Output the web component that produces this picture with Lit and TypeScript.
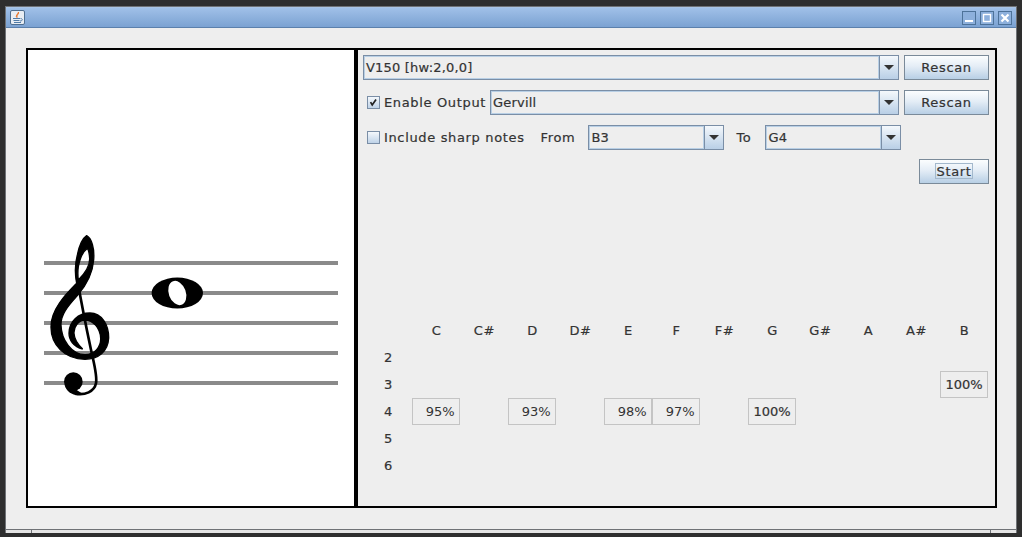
import { LitElement, css, html, svg } from 'lit';
import { customElement } from 'lit/decorators.js';

const NOTES = ['C', 'C#', 'D', 'D#', 'E', 'F', 'F#', 'G', 'G#', 'A', 'A#', 'B'];
const OCTAVES = [2, 3, 4, 5, 6];

// accuracy per note, keyed "note+octave"
const SCORES: Record<string, string> = {
  B3: '100%',
  C4: '  95%',
  D4: '  93%',
  E4: '  98%',
  F4: '  97%',
  G4: '100%',
};

const STAFF_LINES = [263, 293, 323, 353, 383];

@customElement('app-root')
export class AppRoot extends LitElement {
  static styles = css`
    :host {
      display: block;
      width: 1022px;
      height: 537px;
      box-sizing: border-box;
      padding: 6px 5px 5px 5px;
      background: #2e2e2e;
      font-family: 'DejaVu Sans', sans-serif;
      font-size: 13px;
      letter-spacing: 0.65px;
      -webkit-text-stroke: 0.2px #333;
      color: #333;
      overflow: hidden;
    }
    .window {
      height: 100%;
      display: flex;
      flex-direction: column;
      border: 1px solid #6f7276;
      border-bottom: none;
      background: #eee;
    }
    .titlebar {
      height: 21px;
      box-sizing: border-box;
      flex: none;
      display: flex;
      align-items: center;
      padding: 0 4px 0 4px;
      background: linear-gradient(#a0c0e8, #7ba2d2);
      border-top: 1px solid #a9c4e6;
      border-bottom: 1px solid #5b80ac;
    }
    .app-icon {
      width: 15px;
      height: 15px;
      display: block;
    }
    .spacer {
      flex: 1;
    }
    .win-btn {
      width: 14px;
      height: 14px;
      margin-left: 4px;
      display: block;
    }
    .content {
      flex: 1;
      padding: 20px 20px 0 20px;
    }
    .frame {
      width: 971px;
      height: 460px;
      box-sizing: border-box;
      display: flex;
      border: 2px solid #000;
      background: #eee;
    }
    .staff {
      width: 330px;
      height: 456px;
      box-sizing: border-box;
      flex: none;
      background: #fff;
      border-right: 4px solid #000;
      display: block;
    }
    .controls {
      flex: 1;
      min-width: 0;
      padding: 5px 6px 0 5px;
      display: flex;
      flex-direction: column;
    }
    .row {
      display: flex;
      align-items: center;
      height: 25px;
      flex: none;
      margin-bottom: 10px;
    }
    .row.tight {
      margin-bottom: 9px;
    }
    .row.start {
      justify-content: flex-end;
      margin-bottom: 0;
    }
    .combo {
      height: 25px;
      box-sizing: border-box;
      display: flex;
      border: 1px solid #7a8ea6;
      flex: none;
      letter-spacing: 0.2px;
    }
    .combo .value {
      flex: 1;
      box-sizing: border-box;
      border: 1px solid #b8cfe5;
      padding: 0 2px 1px 1px;
      display: flex;
      align-items: center;
      background: #eee;
    }
    .combo .arrow {
      width: 18px;
      border-left: 1px solid #7a8ea6;
      display: flex;
      align-items: center;
      justify-content: center;
      background: linear-gradient(#f4f8fc, #b9cfe6);
    }
    .arrow i {
      display: block;
      width: 0;
      height: 0;
      border-left: 5px solid transparent;
      border-right: 5px solid transparent;
      border-top: 5px solid #333;
    }
    .wide {
      flex: 1;
    }
    .output {
      width: 409px;
    }
    .small {
      width: 136px;
    }
    .btn {
      height: 25px;
      box-sizing: border-box;
      flex: none;
      display: flex;
      align-items: center;
      justify-content: center;
      border: 1px solid #7a8a99;
      padding-bottom: 1px;
      background: linear-gradient(#fbfdfe, #e4edf6 45%, #b8cfe5);
    }
    .rescan {
      width: 85px;
      margin-left: 5px;
    }
    .go {
      width: 70px;
    }
    .focus {
      width: 38px;
      height: 16px;
      box-sizing: border-box;
      border: 1px solid #a3b8cc;
      display: flex;
      align-items: center;
      justify-content: center;
    }
    .check {
      display: flex;
      align-items: center;
      flex: none;
      margin-left: 4px;
    }
    .box {
      width: 13px;
      height: 13px;
      box-sizing: border-box;
      border: 1px solid #7a8ea6;
      background: linear-gradient(#f4f8fc, #bfd3e8);
      margin-right: 4px;
      display: block;
    }
    .label-from {
      margin-left: 16px;
      margin-right: 13px;
    }
    .label-to {
      margin-left: 12px;
      margin-right: 14px;
    }
    .grid {
      margin-top: 133px;
      margin-left: 1px;
      display: grid;
      grid-template-columns: repeat(13, 48px);
      grid-auto-rows: 27px;
    }
    .cell {
      display: flex;
      align-items: center;
      justify-content: center;
      white-space: pre;
      padding-left: 1px;
    }
    .score {
      padding-left: 0;
      border: 1px solid #c4c4c4;
      box-sizing: border-box;
      letter-spacing: 0;
      -webkit-text-stroke: 0;
    }
    .score.full {
      -webkit-text-stroke: 0.2px #333;
    }
    .statusbar {
      height: 4px;
      box-sizing: border-box;
      flex: none;
      display: flex;
      border-top: 1px solid #6f7276;
      background: #e4e4e4;
    }
    .grip {
      width: 25px;
      border-right: 1px solid #6f7276;
      flex: none;
    }
    .grip.middle {
      width: auto;
      flex: 1;
    }
    .grip.last {
      border-right: none;
    }
  `;

  private combo(value: string, cls: string) {
    return html`<div class="combo ${cls}">
      <div class="value">${value}</div>
      <div class="arrow"><i></i></div>
    </div>`;
  }

  private staff() {
    return html`<svg class="staff" viewBox="28 50 326 456">
      ${STAFF_LINES.map(
        (y) => svg`<rect x="44" y=${y - 2} width="294" height="4" fill="#8a8a8a"></rect>`,
      )}
      <g transform="translate(30 225) scale(0.3333)">
        <path
          fill="#000"
          stroke="#000"
          stroke-width="4"
          fill-rule="evenodd"
          d="M170 32 C185 40 194 70 191 105 C188 145 170 180 142 212 C112 245 92 270 93 300
             C94 345 125 388 165 389 C195 389 213 365 212 340 C211 310 190 285 165 285
             C145 286 131 305 132 325 C133 345 145 360 158 372 C130 365 117 345 117 325
             C117 290 145 264 180 264 C215 264 237 300 236 340 C234 380 205 402 165 403
             C105 403 62 360 63 305 C63 255 105 210 140 175 C135 150 134 120 142 90
             C148 60 158 40 170 32 Z
             M172 70 C160 78 150 100 145 125 C143 140 143 150 145 165
             C165 145 180 125 179 100 C178 85 176 75 172 70 Z"
        ></path>
        <path
          fill="none"
          stroke="#000"
          stroke-width="8"
          d="M141 160 C150 210 165 290 180 360 C190 410 203 450 198 475 C193 500 165 512 135 506"
        ></path>
        <circle cx="130" cy="470" r="28" fill="#000"></circle>
        <path d="M104 480 C110 505 135 515 160 508 L140 495 Z" fill="#000"></path>
      </g>
      <ellipse cx="177.3" cy="293" rx="25.7" ry="15.5" fill="#000"></ellipse>
      <ellipse
        cx="177.3"
        cy="293"
        rx="8.5"
        ry="12.5"
        fill="#fff"
        transform="rotate(-20 177.3 293)"
      ></ellipse>
    </svg>`;
  }

  private noteGrid() {
    return html`<div class="grid">
      <div class="cell"></div>
      ${NOTES.map((n) => html`<div class="cell">${n}</div>`)}
      ${OCTAVES.map(
        (o) => html`
          <div class="cell">${o}</div>
          ${NOTES.map((n) => {
            const score = SCORES[n + o];
            if (!score) return html`<div class="cell"></div>`;
            return html`<div class="cell score ${score === '100%' ? 'full' : ''}">${score}</div>`;
          })}
        `,
      )}
    </div>`;
  }

  render() {
    return html`
      <div class="window">
        <div class="titlebar">
          <svg class="app-icon" viewBox="0 0 15 15">
            <rect x="0.5" y="0.5" width="14" height="14" rx="1.5" fill="#e8edf3" stroke="#4f6f90"></rect>
            <path d="M8.5 2 C9.5 4 6 5 7 7.5 C5 6 8 4 8.5 2 Z" fill="#e8762a" stroke="#e8762a" stroke-width="1"></path>
            <path d="M3 8.5 H10 M3.5 10.5 H9.5 M4 12.5 H11" stroke="#4f7ba8" stroke-width="1.1"></path>
            <path d="M10.5 8.5 C13 8.5 13 11 10 11" stroke="#4f7ba8" fill="none"></path>
          </svg>
          <div class="spacer"></div>
          <svg class="win-btn" viewBox="0 0 14 14">
            <rect x="0.5" y="0.5" width="13" height="13" fill="#8db0dc" stroke="#4d7299"></rect>
            <rect x="3" y="9" width="8" height="2" fill="#fff"></rect>
          </svg>
          <svg class="win-btn" viewBox="0 0 14 14">
            <rect x="0.5" y="0.5" width="13" height="13" fill="#8db0dc" stroke="#4d7299"></rect>
            <rect x="3.5" y="3.5" width="7" height="7" fill="none" stroke="#fff" stroke-width="1.4"></rect>
          </svg>
          <svg class="win-btn" viewBox="0 0 14 14">
            <rect x="0.5" y="0.5" width="13" height="13" fill="#8db0dc" stroke="#4d7299"></rect>
            <path d="M3.5 3.5 L10.5 10.5 M10.5 3.5 L3.5 10.5" stroke="#fff" stroke-width="2.2"></path>
          </svg>
        </div>
        <div class="content">
          <div class="frame">
            ${this.staff()}
            <div class="controls">
              <div class="row">
                ${this.combo('V150 [hw:2,0,0]', 'wide')}
                <div class="btn rescan">Rescan</div>
              </div>
              <div class="row">
                <label class="check">
                  <svg class="box" viewBox="0 0 13 13">
                    <path d="M3 6 L5 9.5 L9.5 3" fill="none" stroke="#222" stroke-width="2"></path>
                  </svg>
                  Enable Output
                </label>
                <div class="spacer"></div>
                ${this.combo('Gervill', 'output')}
                <div class="btn rescan">Rescan</div>
              </div>
              <div class="row tight">
                <label class="check"><span class="box"></span>Include sharp notes</label>
                <span class="label-from">From</span>
                ${this.combo('B3', 'small')}
                <span class="label-to">To</span>
                ${this.combo('G4', 'small')}
              </div>
              <div class="row start">
                <div class="btn go"><span class="focus">Start</span></div>
              </div>
              ${this.noteGrid()}
            </div>
          </div>
        </div>
        <div class="statusbar">
          <div class="grip"></div>
          <div class="grip middle"></div>
          <div class="grip last"></div>
        </div>
      </div>
    `;
  }
}
